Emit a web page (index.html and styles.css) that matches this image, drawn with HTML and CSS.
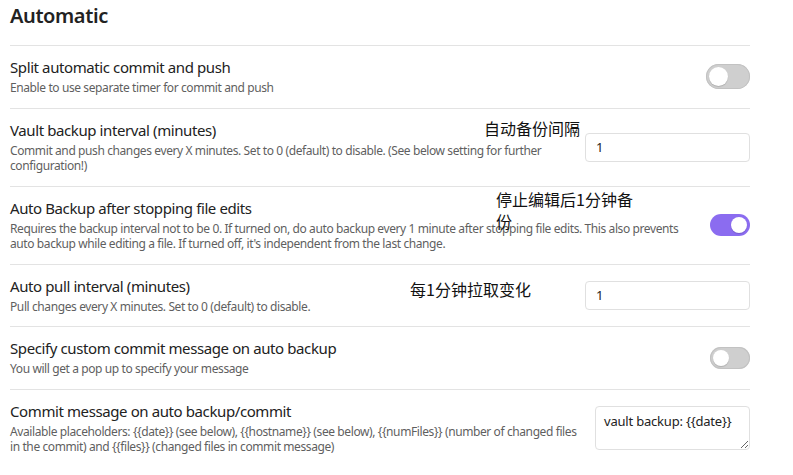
FILE: index.html
```html
<!DOCTYPE html>
<html lang="en">
<head>
<meta charset="utf-8">
<title>Automatic</title>
<link rel="stylesheet" href="styles.css">
</head>
<body>
<div class="settings">
  <div class="heading">Automatic</div>

  <div class="item">
    <div class="info">
      <div class="name">Split automatic commit and push</div>
      <div class="desc">Enable to use separate timer for commit and push</div>
    </div>
    <div class="control"><div class="toggle toggle-big"><span class="knob"></span></div></div>
  </div>

  <div class="item">
    <div class="info">
      <div class="name">Vault backup interval (minutes)</div>
      <div class="desc">Commit and push changes every X minutes. Set to 0 (default) to disable. (See below setting for further<br>configuration!)</div>
    </div>
    <div class="control"><input class="text-input" type="text" value="1"></div>
    <div class="note note-1">自动备份间隔</div>
  </div>

  <div class="item">
    <div class="info">
      <div class="name">Auto Backup after stopping file edits</div>
      <div class="desc">Requires the backup interval not to be 0. If turned on, do auto backup every 1 minute after stopping file edits. This also prevents<br>auto backup while editing a file. If turned off, it's independent from the last change.</div>
    </div>
    <div class="control"><div class="toggle is-on"><span class="knob"></span></div></div>
    <div class="note note-2">停止编辑后1分钟备<br>份</div>
  </div>

  <div class="item">
    <div class="info">
      <div class="name">Auto pull interval (minutes)</div>
      <div class="desc">Pull changes every X minutes. Set to 0 (default) to disable.</div>
    </div>
    <div class="control"><input class="text-input" type="text" value="1"></div>
    <div class="note note-3">每1分钟拉取变化</div>
  </div>

  <div class="item">
    <div class="info">
      <div class="name">Specify custom commit message on auto backup</div>
      <div class="desc">You will get a pop up to specify your message</div>
    </div>
    <div class="control"><div class="toggle"><span class="knob"></span></div></div>
  </div>

  <div class="item">
    <div class="info">
      <div class="name">Commit message on auto backup/commit</div>
      <div class="desc">Available placeholders: {{date}} (see below), {{hostname}} (see below), {{numFiles}} (number of changed files<br>in the commit) and {{files}} (changed files in commit message)</div>
    </div>
    <div class="control"><textarea class="text-area">vault backup: {{date}}</textarea></div>
  </div>
</div>
</body>
</html>
```

FILE: styles.css
```css
html, body {
  margin: 0;
  padding: 0;
  background: #ffffff;
}

body {
  font-family: "Noto Sans", "Noto Sans CJK SC", sans-serif;
  color: #222222;
  width: 793px;
  height: 475px;
  overflow: hidden;
}

.settings {
  width: 740px;
  margin-left: 10px;
}

.heading {
  font-size: 20px;
  font-weight: 600;
  line-height: 26px;
  letter-spacing: -0.4px;
  padding: 3px 0 16px;
  color: #222222;
}

.item {
  position: relative;
  display: flex;
  align-items: center;
  border-top: 1px solid #e3e3e3;
  padding: 12px 0;
}

.info {
  flex: 1 1 auto;
  min-width: 0;
}

.name {
  font-size: 15px;
  line-height: 18px;
  letter-spacing: -0.4px;
  padding-bottom: 4px;
  color: #222222;
}

.desc {
  font-size: 12px;
  line-height: 15.5px;
  letter-spacing: -0.4px;
  color: #5f5f5f;
  white-space: nowrap;
}

.control {
  flex: 0 0 auto;
  display: flex;
  justify-content: flex-end;
}

.toggle {
  position: relative;
  width: 40px;
  height: 22px;
  border-radius: 11px;
  background: #cfcfcf;
  box-shadow: inset 0 0 0 1px #c2c2c2;
}

.toggle .knob {
  position: absolute;
  top: 3px;
  left: 3px;
  width: 16px;
  height: 16px;
  border-radius: 50%;
  background: #ffffff;
  box-shadow: 0 1px 1px rgba(0, 0, 0, 0.15);
}

.toggle-big {
  width: 44px;
  height: 25px;
  border-radius: 13px;
}

.toggle-big .knob {
  width: 19px;
  height: 19px;
}

.toggle.is-on {
  background: #8b6cf0;
  box-shadow: none;
}

.toggle.is-on .knob {
  left: auto;
  right: 3px;
}

.text-input {
  box-sizing: border-box;
  width: 165px;
  height: 29px;
  border: 1px solid #e0e0e0;
  border-radius: 4px;
  padding: 0 10px;
  font-family: "Noto Sans", sans-serif;
  font-size: 13px;
  color: #222222;
  background: #ffffff;
  outline: none;
}

.text-area {
  box-sizing: border-box;
  width: 155px;
  height: 44px;
  border: 1px solid #e0e0e0;
  border-radius: 4px;
  padding: 5px 8px;
  font-family: "Noto Sans", sans-serif;
  font-size: 13px;
  line-height: 18px;
  letter-spacing: -0.2px;
  color: #222222;
  background: #ffffff;
  resize: both;
  outline: none;
  display: block;
}

.note {
  position: absolute;
  font-family: "Noto Sans CJK SC", sans-serif;
  font-size: 16px;
  line-height: 22px;
  color: #111111;
}

.note-1 {
  left: 474px;
  top: 8px;
}

.note-2 {
  left: 486px;
  top: 1px;
}

.note-3 {
  left: 400px;
  top: 13px;
}
```
